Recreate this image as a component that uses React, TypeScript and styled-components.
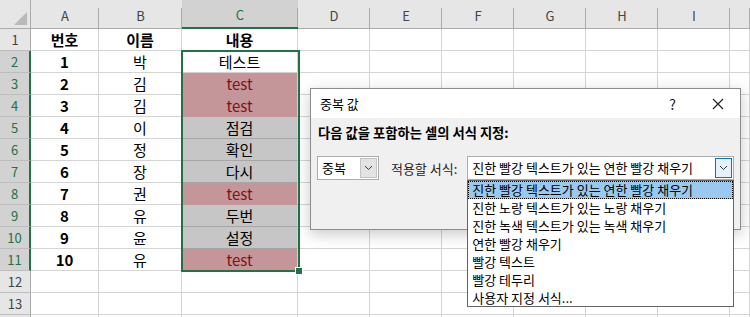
import React, { FC } from 'react';
import styled, { createGlobalStyle, css } from 'styled-components';

const GlobalStyle = createGlobalStyle`
  html, body {
    margin: 0;
    padding: 0;
    background: #fff;
  }
  body {
    font-family: "Noto Sans CJK KR", "Noto Sans", sans-serif;
  }
`;

const FONT = '"Noto Sans CJK KR", "Noto Sans", sans-serif';
const GREEN = '#217346';

// sheet data
const columns = ['A', 'B', 'C', 'D', 'E', 'F', 'G', 'H', 'I', ''];
type Fill = 'none' | 'pink' | 'gray';
const rows: { a: string; b: string; c: string; fill: Fill }[] = [
  { a: '번호', b: '이름', c: '내용', fill: 'none' },
  { a: '1', b: '박', c: '테스트', fill: 'none' },
  { a: '2', b: '김', c: 'test', fill: 'pink' },
  { a: '3', b: '김', c: 'test', fill: 'pink' },
  { a: '4', b: '이', c: '점검', fill: 'gray' },
  { a: '5', b: '정', c: '확인', fill: 'gray' },
  { a: '6', b: '장', c: '다시', fill: 'gray' },
  { a: '7', b: '권', c: 'test', fill: 'pink' },
  { a: '8', b: '유', c: '두번', fill: 'gray' },
  { a: '9', b: '윤', c: '설정', fill: 'gray' },
  { a: '10', b: '유', c: 'test', fill: 'pink' },
  { a: '', b: '', c: '', fill: 'none' },
  { a: '', b: '', c: '', fill: 'none' },
  { a: '', b: '', c: '', fill: 'none' },
];

const formatOptions = [
  '진한 빨강 텍스트가 있는 연한 빨강 채우기',
  '진한 노랑 텍스트가 있는 노랑 채우기',
  '진한 녹색 텍스트가 있는 녹색 채우기',
  '연한 빨강 채우기',
  '빨강 텍스트',
  '빨강 테두리',
  '사용자 지정 서식...',
];

const Screen = styled.div`
  position: relative;
  width: 750px;
  height: 317px;
  overflow: hidden;
  background: #fff;
  font-family: ${FONT};
`;

const Sheet = styled.div`
  display: grid;
  grid-template-columns: 31px 68px 83px 116px repeat(6, 72px) 20px;
  grid-template-rows: 29px repeat(14, 22px);
`;

const Corner = styled.div`
  position: relative;
  background: #e6e6e6;
  border-right: 1px solid #ababab;
  border-bottom: 1px solid #ababab;
  box-sizing: border-box;

  &::after {
    content: '';
    position: absolute;
    right: 3px;
    bottom: 3px;
    width: 0;
    height: 0;
    border-left: 13px solid transparent;
    border-bottom: 13px solid #b9b9b9;
  }
`;

const ColHeader = styled.div<{ $selected?: boolean }>`
  position: relative;
  display: flex;
  align-items: center;
  justify-content: center;
  padding-top: 2px;
  box-sizing: border-box;
  background: ${(p) => (p.$selected ? '#d2d2d2' : '#e6e6e6')};
  color: ${(p) => (p.$selected ? GREEN : '#444')};
  font-size: 13px;
  border-bottom: ${(p) => (p.$selected ? `2px solid ${GREEN}` : '1px solid #ababab')};

  &::after {
    content: '';
    position: absolute;
    right: 0;
    top: 8px;
    bottom: 0;
    width: 1px;
    background: #ababab;
  }
`;

const RowHeader = styled.div<{ $selected?: boolean }>`
  display: flex;
  align-items: center;
  justify-content: center;
  box-sizing: border-box;
  background: ${(p) => (p.$selected ? '#d2d2d2' : '#e6e6e6')};
  color: ${(p) => (p.$selected ? GREEN : '#444')};
  font-size: 13px;
  border-bottom: 1px solid #bdbdbd;
  border-right: ${(p) => (p.$selected ? `2px solid ${GREEN}` : '1px solid #ababab')};
`;

const Cell = styled.div<{ $bold?: boolean; $fill?: Fill }>`
  display: flex;
  align-items: center;
  justify-content: center;
  box-sizing: border-box;
  font-size: 15px;
  line-height: 20px;
  color: #000;
  font-weight: ${(p) => (p.$bold ? 700 : 400)};
  border-right: 1px solid #d4d4d4;
  border-bottom: 1px solid #d4d4d4;
  white-space: nowrap;

  ${(p) =>
    p.$fill === 'pink' &&
    css`
      background: #c4969a;
      color: #7f1016;
      border-bottom-color: #c4969a;
    `}
  ${(p) =>
    p.$fill === 'gray' &&
    css`
      background: #c6c6c6;
      border-bottom-color: #a6a6a6;
    `}
`;

const Selection = styled.div`
  position: absolute;
  left: 181px;
  top: 50px;
  width: 119px;
  height: 222px;
  box-sizing: border-box;
  border: 2px solid ${GREEN};
  pointer-events: none;
`;

const FillHandle = styled.div`
  position: absolute;
  right: -5px;
  bottom: -5px;
  width: 6px;
  height: 6px;
  background: ${GREEN};
  border: 1px solid #fff;
`;

// dialog
const Dialog = styled.div`
  position: absolute;
  left: 310px;
  top: 88px;
  width: 431px;
  height: 142px;
  box-sizing: border-box;
  border: 1px solid #8c8c8c;
  background: #f0f0f0;
  box-shadow: 0 4px 14px rgba(0, 0, 0, 0.22);
  font-size: 13px;
  color: #000;
`;

const TitleBar = styled.div`
  display: flex;
  align-items: center;
  height: 29px;
  background: #fff;
  padding-left: 9px;
`;

const Title = styled.span`
  flex: 1;
  font-size: 13px;
`;

const TitleButton = styled.div`
  width: 45px;
  height: 29px;
  display: flex;
  align-items: center;
  justify-content: center;
  font-size: 14px;
  color: #222;
`;

const Body = styled.div`
  padding: 6px 6px 0 6px;
`;

const Heading = styled.div`
  font-weight: 700;
  line-height: 18px;
  padding-left: 1px;
  font-size: 13.3px;
`;

const FormRow = styled.div`
  display: flex;
  align-items: center;
  margin-top: 14px;
`;

const Combo = styled.div<{ $width: number }>`
  position: relative;
  display: flex;
  align-items: center;
  width: ${(p) => p.$width}px;
  height: 24px;
  box-sizing: border-box;
  background: #fff;
  border: 1px solid #adadad;
  padding: 0 1px 0 4px;
`;

const ComboText = styled.span`
  flex: 1;
  white-space: nowrap;
  line-height: 20px;
`;

const DropButton = styled.div<{ $focused?: boolean }>`
  display: flex;
  align-items: center;
  justify-content: center;
  width: 17px;
  height: 20px;
  box-sizing: border-box;
  border: 1px solid ${(p) => (p.$focused ? '#0078d7' : '#c4c4c4')};
  background: ${(p) => (p.$focused ? '#e5f1fb' : '#e3e3e3')};
`;

const Label = styled.span`
  margin: 0 10px 0 12px;
  color: #222;
  white-space: nowrap;
`;

const List = styled.div`
  position: absolute;
  left: -1px;
  top: 23px;
  width: 267px;
  height: 127px;
  box-sizing: border-box;
  background: #fff;
  border: 1px solid #646464;
  z-index: 2;
`;

const ListItem = styled.div<{ $active?: boolean }>`
  height: 18px;
  line-height: 18px;
  padding-left: 4px;
  font-size: 13px;
  white-space: nowrap;
  box-sizing: border-box;
  ${(p) =>
    p.$active &&
    css`
      background: #99c9ef;
      outline: 1px dotted #000;
      outline-offset: -1px;
    `}
`;

const Chevron: FC = () => (
  <svg width="9" height="6" viewBox="0 0 9 6">
    <polyline points="1,1 4.5,4.5 8,1" fill="none" stroke="#333" strokeWidth="1" />
  </svg>
);

const CloseIcon: FC = () => (
  <svg width="12" height="12" viewBox="0 0 12 12">
    <path d="M1 1 L11 11 M11 1 L1 11" stroke="#222" strokeWidth="1.2" />
  </svg>
);

const App: FC = () => {
  return (
    <>
      <GlobalStyle />
      <Screen>
        <Sheet>
          <Corner />
          {columns.map((c) => (
            <ColHeader key={c || 'J'} $selected={c === 'C'}>
              {c}
            </ColHeader>
          ))}
          {rows.map((r, i) => {
            const n = i + 1;
            const inSel = n >= 2 && n <= 11;
            return (
              <React.Fragment key={n}>
                <RowHeader $selected={inSel}>{n <= 13 ? n : ''}</RowHeader>
                <Cell $bold>{r.a}</Cell>
                <Cell $bold={n === 1}>{r.b}</Cell>
                <Cell $bold={n === 1} $fill={r.fill}>
                  {r.c}
                </Cell>
                {columns.slice(3).map((c) => (
                  <Cell key={c || 'J'} />
                ))}
              </React.Fragment>
            );
          })}
        </Sheet>

        <Selection>
          <FillHandle />
        </Selection>

        <Dialog>
          <TitleBar>
            <Title>중복 값</Title>
            <TitleButton>?</TitleButton>
            <TitleButton>
              <CloseIcon />
            </TitleButton>
          </TitleBar>
          <Body>
            <Heading>다음 값을 포함하는 셀의 서식 지정:</Heading>
            <FormRow>
              <Combo $width={62}>
                <ComboText>중복</ComboText>
                <DropButton>
                  <Chevron />
                </DropButton>
              </Combo>
              <Label>적용할 서식:</Label>
              <Combo $width={267}>
                <ComboText>{formatOptions[0]}</ComboText>
                <DropButton $focused>
                  <Chevron />
                </DropButton>
                <List>
                  {formatOptions.map((o, i) => (
                    <ListItem key={o} $active={i === 0}>
                      {o}
                    </ListItem>
                  ))}
                </List>
              </Combo>
            </FormRow>
          </Body>
        </Dialog>
      </Screen>
    </>
  );
};

export default App;
